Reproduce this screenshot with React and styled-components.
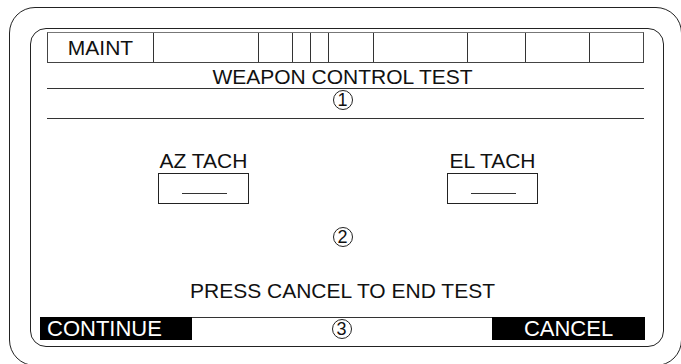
import React from 'react';
import styled, { createGlobalStyle } from 'styled-components';

const cells = [105, 105, 34, 18, 18, 45, 94, 58, 64, 54];

function App() {
    return (
        <>
            <GlobalStyle />
            <Bezel>
                <Screen>
                    <CellRow>
                        {cells.map((w, i) => (
                            <Cell key={i} $first={i === 0}>{i === 0 ? 'MAINT' : ''}</Cell>
                        ))}
                    </CellRow>
                    <Title>WEAPON CONTROL TEST</Title>
                    <Rule />
                    <CalloutRow>
                        <Callout>1</Callout>
                    </CalloutRow>
                    <Rule />
                    <TachRow>
                        <TachGroup>
                            <TachLabel>AZ TACH</TachLabel>
                            <TachBox><Dash /></TachBox>
                        </TachGroup>
                        <TachGroup>
                            <TachLabel>EL TACH</TachLabel>
                            <TachBox><Dash /></TachBox>
                        </TachGroup>
                    </TachRow>
                    <Middle>
                        <Callout>2</Callout>
                    </Middle>
                    <Prompt>PRESS CANCEL TO END TEST</Prompt>
                    <SoftKeys>
                        <SoftKey $align="left">CONTINUE</SoftKey>
                        <KeyGap>
                            <Callout>3</Callout>
                        </KeyGap>
                        <SoftKey $align="center">CANCEL</SoftKey>
                    </SoftKeys>
                </Screen>
            </Bezel>
        </>
    );
}

const GlobalStyle = createGlobalStyle`
    html, body {
        margin: 0;
        padding: 0;
        background: #fff;
        overflow: hidden;
    }
    body {
        font-family: "Liberation Sans", Arial, sans-serif;
        color: #111;
    }
`;

const Bezel = styled.div`
    margin: 7px 0 0 9px;
    width: 673px;
    height: 359px;
    box-sizing: border-box;
    border: 1px solid #222;
    border-radius: 26px;
    padding: 20px 0 0 20px;
`;

const Screen = styled.div`
    width: 634px;
    height: 319px;
    box-sizing: border-box;
    border: 1px solid #222;
    border-radius: 16px;
    display: flex;
    flex-direction: column;
`;

const CellRow = styled.div`
    margin: 3px 19px 0 16px;
    height: 31px;
    box-sizing: border-box;
    border: 1px solid #444;
    border-top-color: #777;
    display: grid;
    grid-template-columns: ${cells.map((w) => w + 'px').join(' ')};
`;

const Cell = styled.div`
    box-sizing: border-box;
    border-left: ${(p) => (p.$first ? 'none' : '1px solid #333')};
    font-size: 21px;
    line-height: 29px;
    text-align: center;
`;

const Centered = styled.div`
    margin: 0 19px 0 16px;
    padding-right: 6px;
    text-align: center;
    font-size: 21px;
    line-height: 23px;
    white-space: nowrap;
`;

const Title = styled(Centered)`
    padding-top: 2px;
`;

const Rule = styled.div`
    margin: 0 19px 0 16px;
    height: 1px;
    background: #333;
`;

const CalloutRow = styled(Centered)`
    height: 29px;
    padding-top: 1px;
    box-sizing: border-box;
`;

const Callout = styled.span`
    display: inline-flex;
    align-items: center;
    justify-content: center;
    width: 20px;
    height: 20px;
    box-sizing: border-box;
    border: 1px solid #222;
    border-radius: 50%;
    font-size: 18px;
    line-height: 1;
    vertical-align: top;
`;

const TachRow = styled.div`
    display: flex;
    gap: 198px;
    padding: 30px 0 0 127px;
`;

const TachGroup = styled.div`
    width: 91px;
    display: flex;
    flex-direction: column;
    align-items: center;
`;

const TachLabel = styled.div`
    font-size: 21px;
    line-height: 23px;
    white-space: nowrap;
    margin-bottom: 1px;
`;

const TachBox = styled.div`
    width: 91px;
    height: 31px;
    box-sizing: border-box;
    border: 1px solid #222;
    display: flex;
    justify-content: center;
    padding: 19px 0 0 2px;
`;

const Dash = styled.div`
    width: 45px;
    height: 1px;
    background: #333;
`;

const Middle = styled(Centered)`
    margin-top: 23px;
    height: 20px;
    line-height: 20px;
`;

const Prompt = styled(Centered)`
    margin-top: 32px;
`;

const SoftKeys = styled.div`
    margin: 15px 18px 0 9px;
    height: 23px;
    display: flex;
`;

const SoftKey = styled.div`
    width: ${(p) => (p.$align === 'left' ? '152px' : '153px')};
    box-sizing: border-box;
    background: #000;
    color: #fff;
    font-size: 22px;
    line-height: 23px;
    text-align: ${(p) => p.$align};
    padding-left: ${(p) => (p.$align === 'left' ? '7px' : '0')};
    white-space: nowrap;
`;

const KeyGap = styled.div`
    flex: 1;
    border-top: 1px solid #333;
    display: flex;
    justify-content: center;
    align-items: center;
    padding-right: 1px;
`;

export default App;
